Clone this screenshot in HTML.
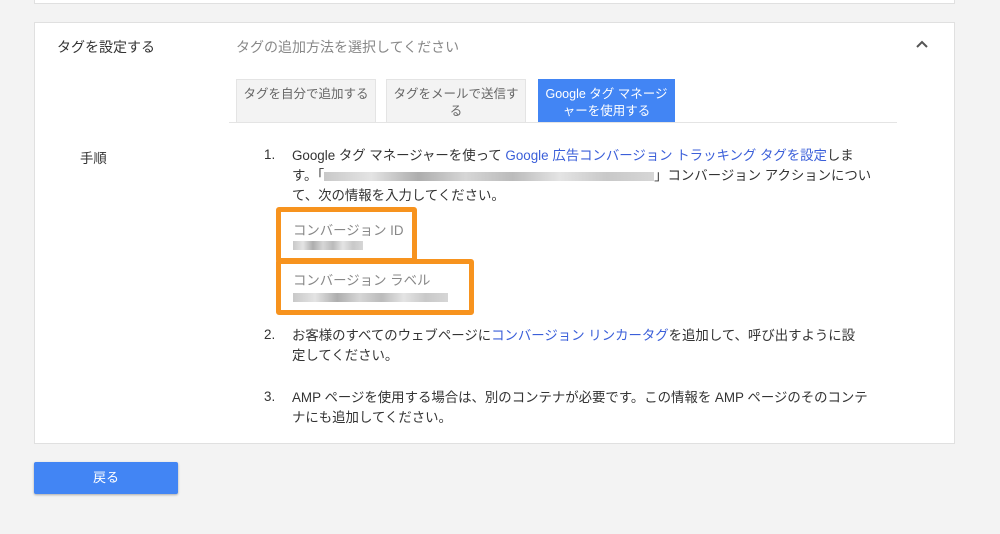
<!DOCTYPE html>
<html><head><meta charset="utf-8"><style>
*{box-sizing:border-box;margin:0;padding:0}
body{width:1000px;height:534px;background:#f3f3f3;font-family:"Liberation Sans","Noto Sans CJK JP",sans-serif;position:relative;overflow:hidden;color:#333}
.a{position:absolute;white-space:nowrap}
.card{position:absolute;background:#fff;border:1px solid #e0e0e0}
.tab{position:absolute;top:79px;height:43px;background:#f3f3f3;border:1px solid #e4e4e4;border-bottom:none;font-size:12.5px;color:#666;text-align:center;line-height:17px;padding-top:6px}
.blur{position:absolute;height:9px;background:linear-gradient(90deg,#bbb,#ddd,#999,#ccc,#aaa,#ddd,#bbb,#ccc);opacity:.8}
.ib{display:inline-block;height:9px;vertical-align:middle;background:linear-gradient(90deg,#bbb,#ddd,#999,#ccc,#aaa,#ddd,#bbb,#ccc);opacity:.8}
.ob{position:absolute;border:5px solid #f7931e;border-radius:3px}
.t{font-size:13.4px;color:#333}
.l{color:#3b5fd9}
</style></head><body>
<div class="card" style="left:34px;top:-5px;width:921px;height:9px"></div>
<div class="card" style="left:34px;top:22px;width:921px;height:422px"></div>
<div class="a" style="left:57px;top:37px;font-size:14px;color:#333">タグを設定する</div>
<div class="a" style="left:236px;top:37px;font-size:14px;color:#888">タグの追加方法を選択してください</div>
<svg class="a" style="left:916px;top:40px" width="12" height="10"><path d="M1 7 L6 2 L11 7" stroke="#555" stroke-width="2" fill="none"/></svg>
<div class="tab" style="left:236px;width:140px">タグを自分で追加する</div>
<div class="tab" style="left:386px;width:140px">タグをメールで送信す<br>る</div>
<div class="tab" style="left:538px;width:137px;background:#4285f4;border-color:#4285f4;color:#fff">Google タグ マネージ<br>ャーを使用する</div>
<div class="a" style="left:229px;top:122px;width:668px;height:1px;background:#e4e4e4"></div>
<div class="a t" style="left:80px;top:147px">手順</div>
<div class="a t" style="left:264px;top:147px">1.</div>
<div class="a t" style="left:292px;top:146px;line-height:20px">Google タグ マネージャーを使って <span class="l">Google 広告コンバージョン トラッキング タグを設定</span>しま<br>す。「<span class="ib" style="width:330px"></span>」コンバージョン アクションについ<br>て、次の情報を入力してください。</div>
<div class="ob" style="left:276px;top:207px;width:141px;height:56px"></div>
<div class="ob" style="left:276px;top:259px;width:198px;height:56px"></div>
<div class="a" style="left:293px;top:219px;font-size:13.4px;color:#888">コンバージョン ID</div>
<div class="blur" style="left:293px;top:241px;width:70px"></div>
<div class="a" style="left:293px;top:269px;font-size:13.4px;color:#888">コンバージョン ラベル</div>
<div class="blur" style="left:293px;top:293px;width:155px"></div>
<div class="a t" style="left:264px;top:327px">2.</div>
<div class="a t" style="left:292px;top:326px;line-height:20px">お客様のすべてのウェブページに<span class="l">コンバージョン リンカータグ</span>を追加して、呼び出すように設<br>定してください。</div>
<div class="a t" style="left:264px;top:389px">3.</div>
<div class="a t" style="left:292px;top:388px;line-height:20px">AMP ページを使用する場合は、別のコンテナが必要です。この情報を AMP ページのそのコンテ<br>ナにも追加してください。</div>
<div class="a" style="left:34px;top:462px;width:144px;height:32px;background:#4285f4;border-radius:2px;box-shadow:0 1px 2px rgba(0,0,0,.3);color:#fff;font-size:13px;text-align:center;line-height:32px">戻る</div>
</body></html>
